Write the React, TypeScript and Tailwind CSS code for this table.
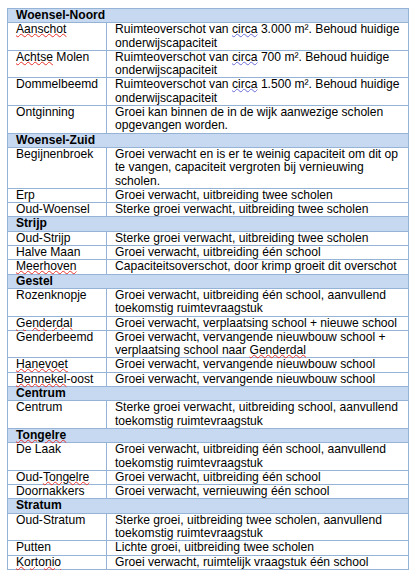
import React from "react";

type Row = [string, string[]];
type Section = { name: string; rows: Row[] };

const sections: Section[] = [
  {
    name: "Woensel-Noord",
    rows: [
      ["~Aanschot~", ["Ruimteoverschot van ^circa^ 3.000 m². Behoud huidige", "onderwijscapaciteit"]],
      ["~Achtse~ Molen", ["Ruimteoverschot van ^circa^ 700 m². Behoud huidige", "onderwijscapaciteit"]],
      ["Dommelbeemd", ["Ruimteoverschot van ^circa^ 1.500 m². Behoud huidige", "onderwijscapaciteit"]],
      ["Ontginning", ["Groei kan binnen de in de wijk aanwezige scholen", "opgevangen worden."]],
    ],
  },
  {
    name: "Woensel-Zuid",
    rows: [
      [
        "Begijnenbroek",
        [
          "Groei verwacht en is er te weinig capaciteit om dit op",
          "te vangen, capaciteit vergroten bij vernieuwing",
          "scholen.",
        ],
      ],
      ["Erp", ["Groei verwacht, uitbreiding twee scholen"]],
      ["Oud-Woensel", ["Sterke groei verwacht, uitbreiding twee scholen"]],
    ],
  },
  {
    name: "Strijp",
    rows: [
      ["Oud-Strijp", ["Sterke groei verwacht, uitbreiding twee scholen"]],
      ["Halve Maan", ["Groei verwacht, uitbreiding één school"]],
      ["~Meerhoven~", ["Capaciteitsoverschot, door krimp groeit dit overschot"]],
    ],
  },
  {
    name: "Gestel",
    rows: [
      ["Rozenknopje", ["Groei verwacht, uitbreiding één school, aanvullend", "toekomstig ruimtevraagstuk"]],
      ["~Genderdal~", ["Groei verwacht, verplaatsing school + nieuwe school"]],
      ["Genderbeemd", ["Groei verwacht, vervangende nieuwbouw school +", "verplaatsing school naar ~Genderdal~"]],
      ["~Hanevoet~", ["Groei verwacht, vervangende nieuwbouw school"]],
      ["~Bennekel~-oost", ["Groei verwacht, vervangende nieuwbouw school"]],
    ],
  },
  {
    name: "Centrum",
    rows: [["Centrum", ["Sterke groei verwacht, uitbreiding school, aanvullend", "toekomstig ruimtevraagstuk"]]],
  },
  {
    name: "~Tongelre~",
    rows: [
      ["De Laak", ["Groei verwacht, uitbreiding één school, aanvullend", "toekomstig ruimtevraagstuk"]],
      ["Oud-~Tongelre~", ["Groei verwacht, uitbreiding één school"]],
      ["Doornakkers", ["Groei verwacht, vernieuwing één school"]],
    ],
  },
  {
    name: "Stratum",
    rows: [
      ["Oud-Stratum", ["Sterke groei, uitbreiding twee scholen, aanvullend", "toekomstig ruimtevraagstuk"]],
      ["Putten", ["Lichte groei, uitbreiding twee scholen"]],
      ["~Kortonio~", ["Groei verwacht, ruimtelijk vraagstuk één school"]],
    ],
  },
];

function Marked({ text }: { text: string }) {
  const parts = text.split(/(~[^~]+~|\^[^^]+\^)/);
  return (
    <>
      {parts.map((p, i) => {
        if (p.startsWith("~") && p.endsWith("~") && p.length > 1) {
          return (
            <span
              key={i}
              className="underline decoration-wavy decoration-[#e8322c] decoration-[0.5px] underline-offset-[0px]"
            >
              {p.slice(1, -1)}
            </span>
          );
        }
        if (p.startsWith("^") && p.endsWith("^") && p.length > 1) {
          return (
            <span
              key={i}
              className="underline decoration-wavy decoration-[#6b6bd8] decoration-[0.5px] underline-offset-[0px]"
            >
              {p.slice(1, -1)}
            </span>
          );
        }
        return <React.Fragment key={i}>{p}</React.Fragment>;
      })}
    </>
  );
}

export default function App() {
  return (
    <div
      className="w-[412px] h-[579px] bg-white pt-[8px] pl-[7px] text-black"
      style={{ fontFamily: '"Liberation Sans", Arial, sans-serif' }}
    >
      <table className="w-[402px] border-collapse text-[12.1px] leading-[13.3px] table-fixed">
        <colgroup>
          <col className="w-[99px]" />
          <col />
        </colgroup>
        <tbody>
          {sections.map((s) => (
            <React.Fragment key={s.name}>
              <tr className="bg-[#c6d9f1]">
                <td colSpan={2} className="border border-[#95b3d7] pl-[8px] font-bold whitespace-nowrap">
                  <Marked text={s.name} />
                </td>
              </tr>
              {s.rows.map(([name, lines]) => (
                <tr key={name}>
                  <td className="border border-[#95b3d7] pl-[8px] align-top whitespace-nowrap">
                    <Marked text={name} />
                  </td>
                  <td className="border border-[#95b3d7] pl-[8px] align-top whitespace-nowrap">
                    {lines.map((l, i) => (
                      <div key={i}>
                        <Marked text={l} />
                      </div>
                    ))}
                  </td>
                </tr>
              ))}
            </React.Fragment>
          ))}
        </tbody>
      </table>
    </div>
  );
}
